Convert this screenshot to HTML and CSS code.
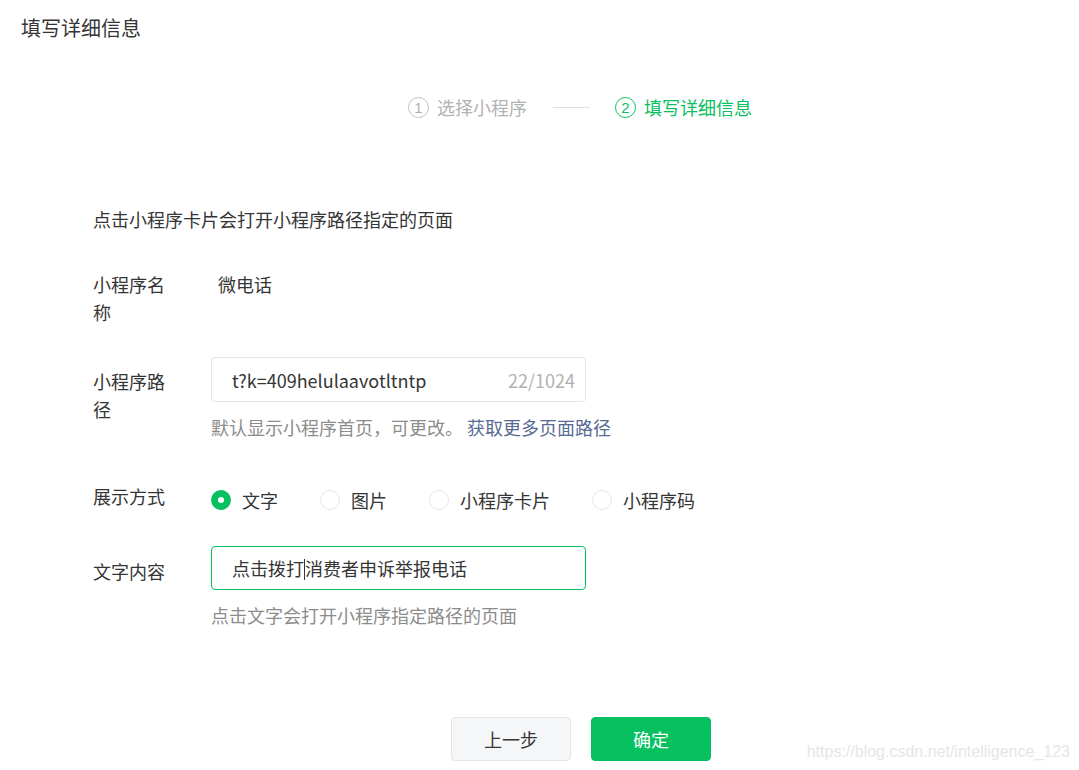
FILE: index.html
```html
<!DOCTYPE html>
<html lang="zh-CN">
<head>
    <meta charset="UTF-8">
    <title>填写详细信息</title>
    <link rel="stylesheet" href="styles.css">
</head>
<body>
<div class="page">
    <h2 class="title">填写详细信息</h2>
    <div class="steps">
        <div class="step">
            <span class="num">1</span>
            <span>选择小程序</span>
        </div>
        <div class="step-line"></div>
        <div class="step on">
            <span class="num">2</span>
            <span>填写详细信息</span>
        </div>
    </div>
    <div class="form">
        <p class="intro">点击小程序卡片会打开小程序路径指定的页面</p>
        <div class="row row-name">
            <label>小程序名称</label>
            <div class="value">微电话</div>
        </div>
        <div class="row row-path">
            <label>小程序路径</label>
            <div class="field">
                <div class="input">
                    <span class="text">t?k=409helulaavotltntp</span>
                    <span class="count">22/1024</span>
                </div>
                <p class="tips">默认显示小程序首页，可更改。 <a href="javascript:;">获取更多页面路径</a></p>
            </div>
        </div>
        <div class="row row-type">
            <label>展示方式</label>
            <ul class="radios">
                <li class="checked"><i></i>文字</li>
                <li><i></i>图片</li>
                <li><i></i>小程序卡片</li>
                <li><i></i>小程序码</li>
            </ul>
        </div>
        <div class="row row-text">
            <label>文字内容</label>
            <div class="field">
                <div class="input focus">
                    <span class="text">点击拨打<b class="caret"></b>消费者申诉举报电话</span>
                </div>
                <p class="tips">点击文字会打开小程序指定路径的页面</p>
            </div>
        </div>
    </div>
    <div class="btns">
        <a class="btn" href="javascript:;">上一步</a>
        <a class="btn btn-primary" href="javascript:;">确定</a>
    </div>
    <div class="mark">https://blog.csdn.net/intelligence_123</div>
</div>
</body>
</html>
```

FILE: styles.css
```css
*{
    margin: 0;
    padding: 0;
    list-style: none;
    box-sizing: border-box;
}
body{
    font-family: "Noto Sans CJK SC", "Noto Sans", sans-serif;
    font-size: 18px;
    color: #353535;
    background: #fff;
}
a{
    text-decoration: none;
}
.page{
    position: relative;
    width: 1079px;
    height: 770px;
    overflow: hidden;
}
.title{
    font-size: 20px;
    font-weight: normal;
    line-height: 28px;
    padding: 14px 0 0 21px;
}
.steps{
    display: flex;
    align-items: center;
    margin-top: 51px;
    padding-left: 408px;
    height: 28px;
    line-height: 28px;
    color: #b2b2b2;
}
.step{
    display: flex;
    align-items: center;
}
.step .num{
    width: 21px;
    height: 21px;
    border: 1px solid #c2c2c2;
    border-radius: 50%;
    font-family: "Liberation Sans", sans-serif;
    font-size: 15px;
    line-height: 19px;
    text-align: center;
    margin-right: 8px;
}
.step.on{
    color: #07c160;
}
.step.on .num{
    border-color: #07c160;
}
.step-line{
    width: 37px;
    height: 1px;
    background: #e0e0e0;
    margin: 0 25px 0 26px;
}
.form{
    padding-left: 93px;
}
.intro{
    margin-top: 84px;
    line-height: 28px;
}
.row{
    display: flex;
    align-items: flex-start;
    line-height: 28px;
}
.row label{
    width: 80px;
    margin-right: 38px;
    flex-shrink: 0;
}
.row-name{
    margin-top: 37px;
}
.row-name .value{
    padding-left: 7px;
}
.row-path{
    margin-top: 31px;
}
.row-path label{
    padding-top: 10px;
}
.input{
    display: flex;
    align-items: center;
    justify-content: space-between;
    width: 375px;
    height: 45px;
    padding: 0 10px 0 20px;
    border: 1px solid #e5e5e5;
    border-radius: 4px;
}
.input .count{
    color: #b2b2b2;
}
.input.focus{
    height: 44px;
    border-color: #07c160;
}
.caret{
    display: inline-block;
    width: 1px;
    height: 21px;
    background: #353535;
    vertical-align: -4px;
}
.tips{
    margin-top: 11px;
    color: #8c8c8c;
}
.tips a{
    color: #576b95;
}
.row-type{
    margin-top: 41px;
}
.radios{
    display: flex;
    padding-top: 4px;
}
.radios li{
    display: flex;
    align-items: center;
    margin-right: 42px;
}
.radios li i{
    width: 20px;
    height: 20px;
    border: 1px solid #e5e5e5;
    border-radius: 50%;
    margin-right: 11px;
}
.radios li.checked i{
    border: 7px solid #07c160;
    background: #fff;
}
.row-text{
    margin-top: 32px;
}
.row-text label{
    padding-top: 11px;
}
.btns{
    display: flex;
    gap: 20px;
    margin-top: 88px;
    padding-left: 451px;
}
.btn{
    display: block;
    width: 120px;
    height: 44px;
    line-height: 42px;
    text-align: center;
    border: 1px solid #e3e5e8;
    border-radius: 4px;
    background: #f5f6f8;
    color: #353535;
}
.btn-primary{
    border-color: #07c160;
    background: #07c160;
    color: #fff;
}
.mark{
    position: absolute;
    right: 9px;
    bottom: 9px;
    font-family: "Liberation Sans", sans-serif;
    font-size: 16px;
    color: #e6e6e6;
}
```
